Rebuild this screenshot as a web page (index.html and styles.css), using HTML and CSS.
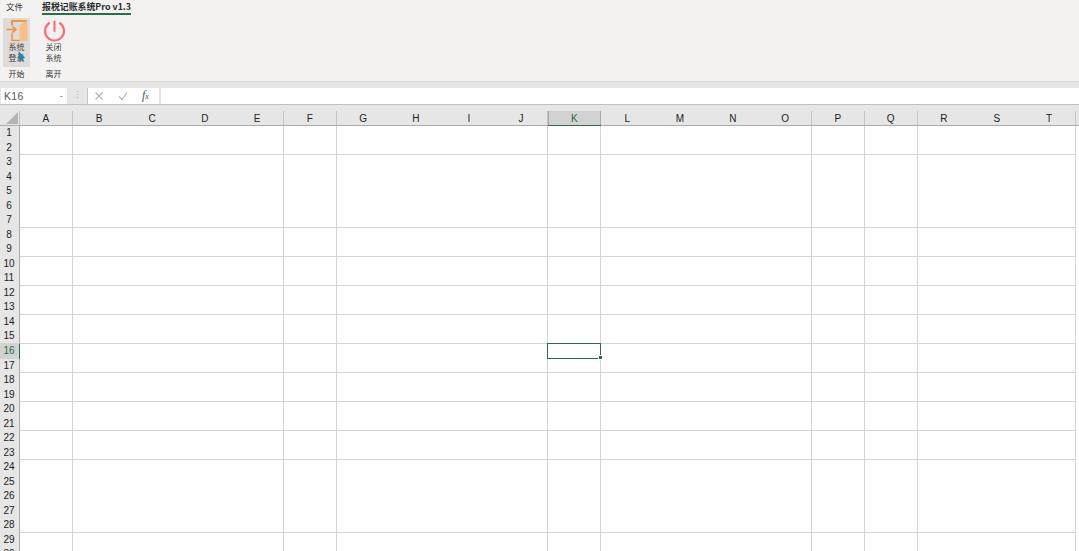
FILE: index.html
```html
<!DOCTYPE html>
<html lang="zh">
<head>
<meta charset="utf-8">
<title>报税记账系统Pro v1.3</title>
<link rel="stylesheet" href="styles.css">
</head>
<body>
<div class="app">
  <header class="ribbon">
    <nav class="tabs">
      <span class="tab">文件</span>
      <span class="tab tab-active">报税记账系统Pro v1.3</span>
    </nav>
    <div class="groups">
      <section class="group">
        <button class="tool tool-hover">
          <svg class="tool-icon" width="26" height="24" viewBox="0 0 26 24">
            <path d="M8 5.5V1H23" fill="none" stroke="#f5923e" stroke-width="2"/>
            <path d="M8 13V20.5H16" fill="none" stroke="#f5923e" stroke-width="1.5"/>
            <path d="M15.5 5.5L23.5 .5V20.8H15.5Z" fill="#fbbd85"/>
            <path d="M2.5 9.5H11.5M8.5 6.3L11.8 9.5L8.5 12.7" fill="none" stroke="#f5923e" stroke-width="1.7"/>
          </svg>
          <span class="tool-label">系统<br>登录</span>
        </button>
        <span class="group-name">开始</span>
      </section>
      <section class="group">
        <button class="tool">
          <svg class="tool-icon" width="26" height="24" viewBox="0 0 26 24">
            <path d="M8.75 2.77A9.5 9.5 0 1 0 18.25 2.77" fill="none" stroke="#f76f70" stroke-width="2.1"/>
            <path d="M13.5 .7V11.7" fill="none" stroke="#f76f70" stroke-width="2.1"/>
          </svg>
          <span class="tool-label">关闭<br>系统</span>
        </button>
        <span class="group-name">离开</span>
      </section>
    </div>
    <svg class="cursor" width="8" height="11" viewBox="0 0 10 14">
      <path d="M1 1V11L3.5 9L5.5 13L7 12.2L5.2 8.5H8.5Z" fill="#1a8bc8" stroke="#0d5f94" stroke-width=".5"/>
    </svg>
  </header>

  <div class="formula-strip">
    <div class="name-box"><span>K16</span><span class="name-caret">-</span></div>
    <div class="splitter">⋮</div>
    <div class="formula-tools">
      <svg width="10" height="10" viewBox="0 0 10 10"><path d="M1.5 1.5L8.5 8.5M8.5 1.5L1.5 8.5" fill="none" stroke="#b4b4b4" stroke-width="1.2"/></svg>
      <svg width="10" height="10" viewBox="0 0 10 10"><path d="M1 5.5L4 8.5L9 1.5" fill="none" stroke="#b4b4b4" stroke-width="1.2"/></svg>
      <span class="fx">f<small class="fx-x">x</small></span>
    </div>
    <div class="formula-input"></div>
  </div>

  <div class="col-head">
    <div class="corner"><svg width="12" height="12" viewBox="0 0 12 12"><path d="M12 0V12H0Z" fill="#b4b4b4"/></svg></div>
    <div class="ch ch-line">A</div>
    <div class="ch">B</div><div class="ch">C</div><div class="ch">D</div><div class="ch ch-line">E</div>
    <div class="ch ch-line">F</div>
    <div class="ch">G</div><div class="ch">H</div><div class="ch">I</div><div class="ch ch-line">J</div>
    <div class="ch ch-sel">K</div>
    <div class="ch">L</div><div class="ch">M</div><div class="ch">N</div><div class="ch ch-line">O</div>
    <div class="ch ch-line">P</div>
    <div class="ch ch-line">Q</div>
    <div class="ch">R</div><div class="ch">S</div><div class="ch ch-line">T</div>
  </div>

  <div class="sheet">
    <div class="row-head">
      <div class="rh">1</div><div class="rh">2</div><div class="rh">3</div><div class="rh">4</div><div class="rh">5</div>
      <div class="rh">6</div><div class="rh">7</div><div class="rh">8</div><div class="rh">9</div><div class="rh">10</div>
      <div class="rh">11</div><div class="rh">12</div><div class="rh">13</div><div class="rh">14</div><div class="rh">15</div>
      <div class="rh rh-sel">16</div><div class="rh">17</div><div class="rh">18</div><div class="rh">19</div><div class="rh">20</div>
      <div class="rh">21</div><div class="rh">22</div><div class="rh">23</div><div class="rh">24</div><div class="rh">25</div>
      <div class="rh">26</div><div class="rh">27</div><div class="rh">28</div><div class="rh">29</div><div class="rh">30</div>
    </div>
    <div class="cells">
      <div class="band"><i></i><i class="w4"></i><i></i><i class="w4"></i><i></i><i class="w4"></i><i></i><i></i><i class="w3"></i></div>
      <div class="band band-tall"><i></i><i class="w4"></i><i></i><i class="w4"></i><i></i><i class="w4"></i><i></i><i></i><i class="w3"></i></div>
      <div class="band"><i></i><i class="w4"></i><i></i><i class="w4"></i><i></i><i class="w4"></i><i></i><i></i><i class="w3"></i></div>
      <div class="band"><i></i><i class="w4"></i><i></i><i class="w4"></i><i></i><i class="w4"></i><i></i><i></i><i class="w3"></i></div>
      <div class="band"><i></i><i class="w4"></i><i></i><i class="w4"></i><i></i><i class="w4"></i><i></i><i></i><i class="w3"></i></div>
      <div class="band"><i></i><i class="w4"></i><i></i><i class="w4"></i><i></i><i class="w4"></i><i></i><i></i><i class="w3"></i></div>
      <div class="band"><i></i><i class="w4"></i><i></i><i class="w4"></i><i class="active"><b class="selection"></b></i><i class="w4"></i><i></i><i></i><i class="w3"></i></div>
      <div class="band"><i></i><i class="w4"></i><i></i><i class="w4"></i><i></i><i class="w4"></i><i></i><i></i><i class="w3"></i></div>
      <div class="band"><i></i><i class="w4"></i><i></i><i class="w4"></i><i></i><i class="w4"></i><i></i><i></i><i class="w3"></i></div>
      <div class="band"><i></i><i class="w4"></i><i></i><i class="w4"></i><i></i><i class="w4"></i><i></i><i></i><i class="w3"></i></div>
      <div class="band band-tall"><i></i><i class="w4"></i><i></i><i class="w4"></i><i></i><i class="w4"></i><i></i><i></i><i class="w3"></i></div>
      <div class="band"><i></i><i class="w4"></i><i></i><i class="w4"></i><i></i><i class="w4"></i><i></i><i></i><i class="w3"></i></div>
    </div>
  </div>
</div>
</body>
</html>
```
FILE: styles.css
```css
* { box-sizing: border-box; }
html, body { margin: 0; height: 100%; background: #fff; overflow: hidden; }
.app {
  width: 1079px; height: 551px; display: flex; flex-direction: column; overflow: hidden;
  font-family: "Liberation Sans", "Noto Sans CJK SC", sans-serif; color: #222;
}

/* ribbon */
.ribbon { position: relative; height: 81px; flex: none; background: #f3f2f1; }
.tabs { display: flex; height: 16px; padding-left: 6px; gap: 19px; font-family: "Noto Sans CJK SC", sans-serif; font-size: 8.5px; line-height: 13px; }
.tab { height: 15px; color: #333; }
.tab-active { font-size: 8.9px; font-weight: 600; border-bottom: 2px solid #217346; width: 89px; white-space: nowrap; color: #2b2b2b; }
.groups { display: flex; padding: 2px 0 0 3px; gap: 10px; }
.group { display: flex; flex-direction: column; align-items: center; width: 27px; }
.tool {
  width: 27px; height: 49px; padding: 2px 0 0; border: 0; background: none; display: flex; flex-direction: column; align-items: center;
  font-family: "Noto Sans CJK SC", sans-serif; color: #444;
}
.tool-hover { background: #dddcdb; }
.tool-icon { display: block; flex: none; }
.tool-label { font-size: 8px; line-height: 11px; margin-top: -3px; }
.group-name { font-family: "Noto Sans CJK SC", sans-serif; font-size: 8px; line-height: 12px; margin-top: 1px; color: #333; }
.cursor { position: absolute; left: 18px; top: 51px; }

/* formula bar */
.formula-strip {
  height: 24px; flex: none; display: flex; padding-top: 6px; background: #e6e6e6;
  border-top: 1px solid #d9d8d7; border-bottom: 1px solid #c0c0c0;
}
.name-box {
  width: 66px; margin-left: 1px; height: 16px; background: #fff; display: flex; justify-content: space-between; align-items: center;
  padding: 0 4px 0 3px; font-size: 10.5px; color: #5d5650; letter-spacing: .3px;
}
.name-caret { color: #777; font-size: 9px; }
.splitter { width: 20px; text-align: center; font-size: 9px; line-height: 15px; color: #aaa; }
.formula-tools { width: 72px; height: 16px; background: #fff; border-left: 1px solid #c6c6c6; display: flex; align-items: center; padding-left: 6px; gap: 14px; }
.fx { font-family: "Liberation Serif", serif; font-style: italic; font-size: 12px; line-height: 14px; color: #555; }
.fx-x { font-size: 8px; }
.formula-input { flex: 1; height: 16px; margin-left: 2px; background: #fff; }

/* column heads */
.col-head { height: 21px; flex: none; padding-top: 6px; display: grid; grid-template-columns: 20px repeat(20, 52.8px); background: #e6e6e6; border-bottom: 1px solid #ababab; }
.corner { display: flex; align-items: flex-end; justify-content: flex-end; padding: 0 1px 1px 0; border-right: 1px solid #c0c0c0; }
.ch { display: flex; align-items: center; justify-content: center; font-size: 10px; color: #222; }
.ch-line { border-right: 1px solid #c4c4c4; }
.ch-sel { background: #d2d2d2; color: #1f6a42; border-left: 1px solid #ababab; border-right: 1px solid #ababab; box-shadow: 0 1px 0 #217346; }

/* grid */
.sheet { flex: 1; min-height: 0; display: flex; overflow: hidden; }
.row-head { width: 20px; flex: none; background: #e6e6e6; border-right: 1px solid #ababab; }
.rh { height: 14.54px; font-size: 10px; line-height: 14.5px; text-align: center; padding-right: 1px; color: #222; }
.rh-sel { background: #d2d2d2; color: #1f6a42; box-shadow: 1px 0 0 #217346, 0 -1px 0 #d2d2d2; }
.cells { width: 1056px; flex: none; }
.band { height: 29px; display: grid; grid-template-columns: repeat(20, 52.8px); }
.band-tall { height: 73px; }
.band i { display: block; border-right: 1px solid #d4d4d4; border-bottom: 1px solid #d4d4d4; }
.band .w3 { grid-column: span 3; }
.band .w4 { grid-column: span 4; }
.active { position: relative; }
.selection { position: absolute; left: -1px; top: -1px; width: 54px; height: 16px; border: 1px solid #217346; }
.selection::after {
  content: ""; position: absolute; right: -2px; bottom: -1px; width: 3px; height: 3px; background: #217346; outline: 1px solid #fff;
}
```
